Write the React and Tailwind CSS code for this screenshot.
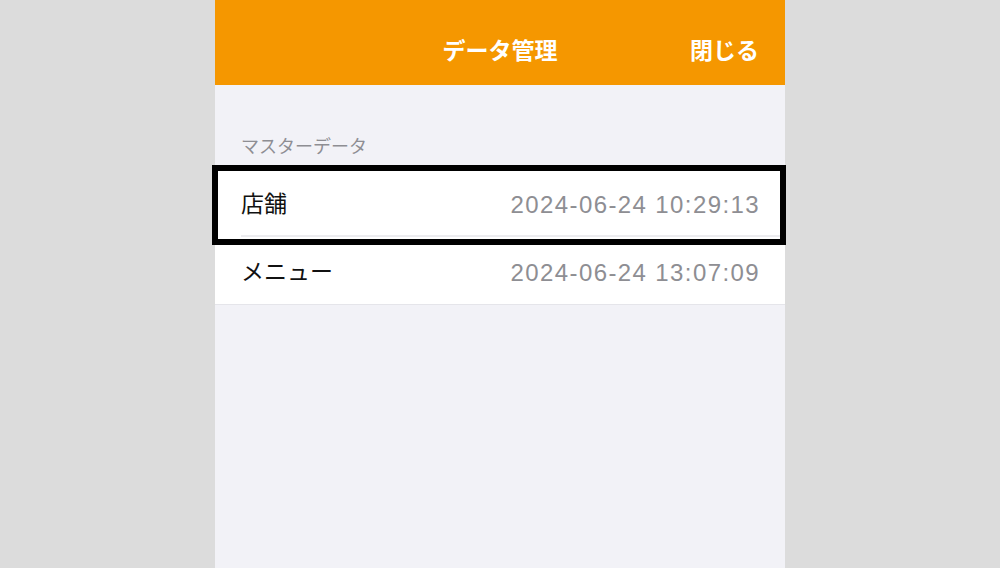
export default function App() {
  const rows = [
    { name: '店舗', date: '2024-06-24 10:29:13' },
    { name: 'メニュー', date: '2024-06-24 13:07:09' },
  ]

  return (
    <div
      className="w-[1000px] h-[568px] bg-[#dcdcdc] flex justify-center overflow-hidden"
      style={{ fontFamily: '"Liberation Sans", "Noto Sans CJK JP", sans-serif' }}
    >
      <div className="w-[570px] h-full bg-[#f2f2f7] flex flex-col">
        <header className="h-[85px] bg-[#f59700] relative flex items-center justify-center shrink-0">
          <h1 className="text-white text-[23px] font-semibold leading-none pt-[17px]">データ管理</h1>
          <button className="absolute right-[26px] top-[40px] text-white text-[23px] font-semibold leading-none">閉じる</button>
        </header>

        <div className="pt-[52px] pl-[26px] pb-[13px] text-[18px] text-[#8e8e93] leading-[20px]">マスターデータ</div>

        <div className="relative">
          <div className="bg-white border-b border-[#e5e5ea]">
            {rows.map((r, i) => (
              <div key={r.name} className="pl-[26px]">
                <div
                  className={`h-[67px] pt-[4px] flex items-center justify-between pr-[25px] ${i === 0 ? 'border-b-2 border-[#ececef]' : ''}`}
                >
                  <span className="text-[23px] text-[#111]">{r.name}</span>
                  <span className="text-[24px] text-[#8e8e93] tracking-[1.4px]">{r.date}</span>
                </div>
              </div>
            ))}
          </div>
          <div className="absolute left-[-3px] top-[-5px] w-[574px] h-[80px] border-[6px] border-black pointer-events-none" />
        </div>
      </div>
    </div>
  )
}
